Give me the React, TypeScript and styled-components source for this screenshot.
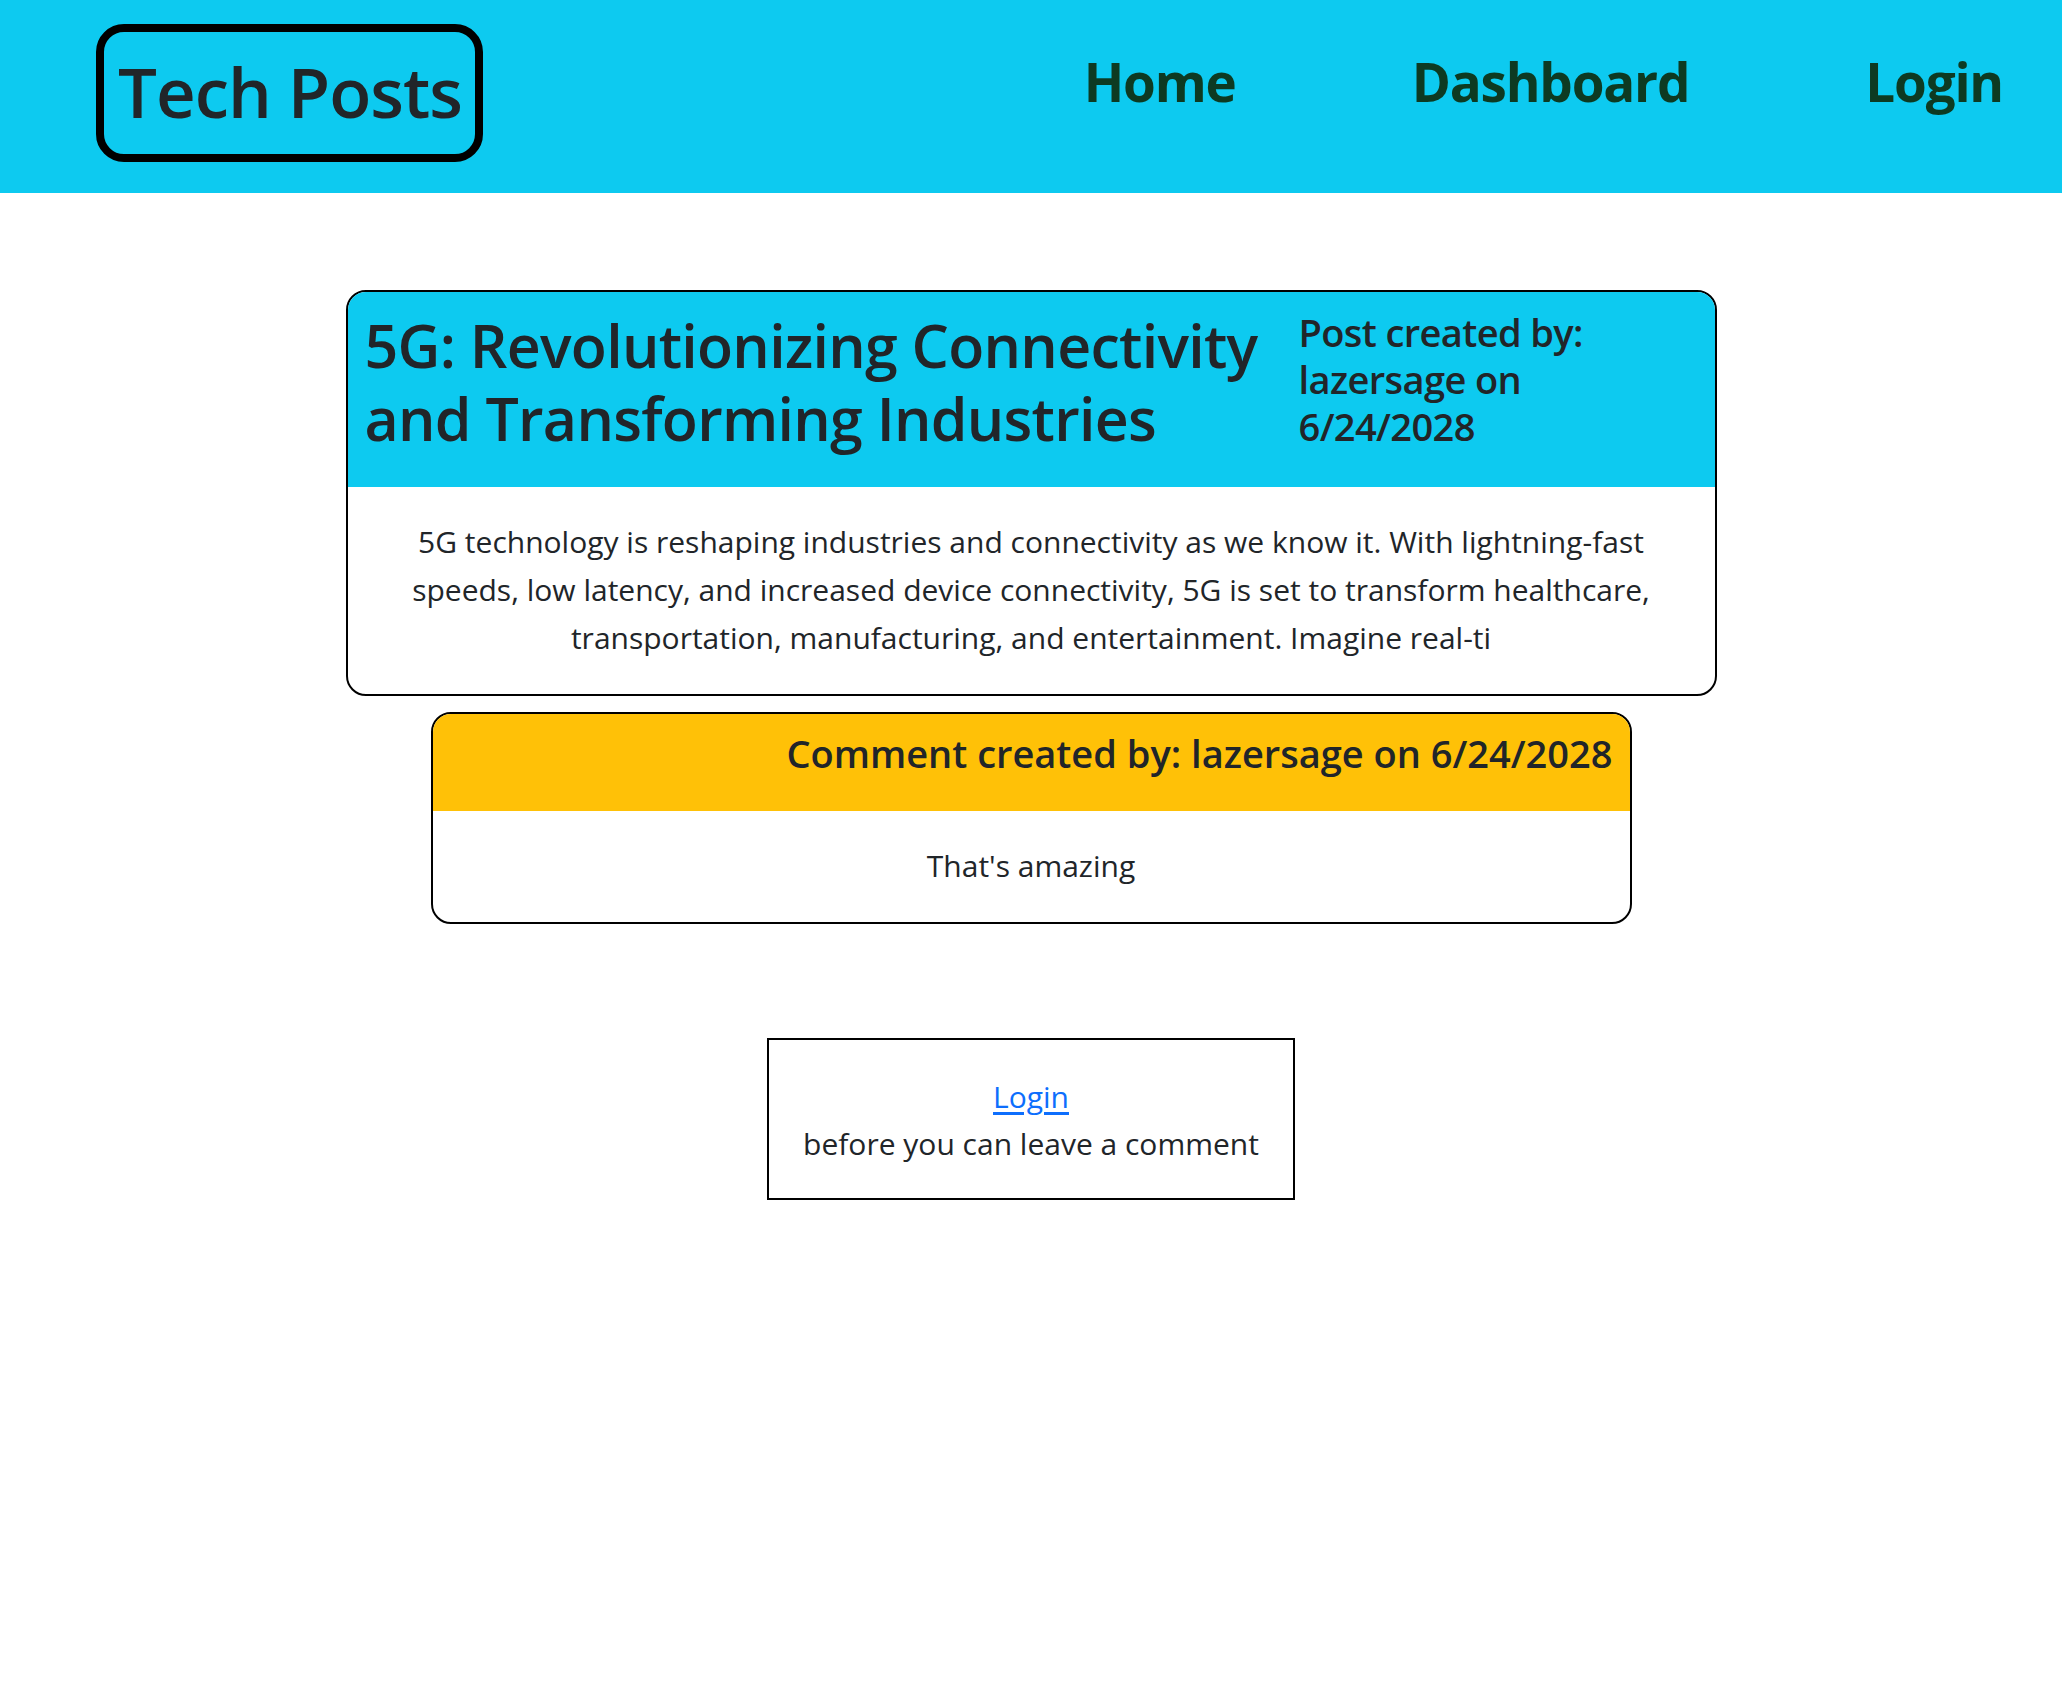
import React from "react";
import styled, { createGlobalStyle } from "styled-components";

const GlobalStyle = createGlobalStyle`
  html, body { margin: 0; padding: 0; background: #fff; }
  body {
    font-family: "Open Sans", "Noto Sans", Arial, sans-serif;
    color: #212529;
  }
  * { box-sizing: border-box; }
`;

const Header = styled.header`
  height: 193px;
  background: #0dcaf0;
  display: flex;
  align-items: center;
  justify-content: space-between;
  padding: 0 59px 0 96px;
`;

const Logo = styled.a`
  display: flex;
  align-items: center;
  height: 138px;
  margin-bottom: 7px;
  padding: 0 13px 4px 14px;
  border: 8px solid #000;
  border-radius: 28px;
  font-size: 69px;
  font-weight: 600;
  letter-spacing: -1px;
  color: #212529;
  text-decoration: none;
  white-space: nowrap;
`;

const Nav = styled.nav`
  display: flex;
  align-items: center;
  gap: 176px;
  padding-bottom: 30px;
`;

const NavLink = styled.a`
  font-size: 53px;
  font-weight: 700;
  letter-spacing: -1.2px;
  line-height: 1.2;
  color: #0d3a22;
  text-decoration: none;
`;

const Main = styled.main`
  display: flex;
  flex-direction: column;
  align-items: center;
  padding-top: 97px;
`;

const Card = styled.article<{ $width: number }>`
  width: ${(p) => p.$width}px;
  border: 2px solid #000;
  border-radius: 20px;
  overflow: hidden;
  margin-bottom: 16px;
`;

const PostHead = styled.div`
  display: grid;
  grid-template-columns: 1fr 376px;
  column-gap: 30px;
  background: #0dcaf0;
  padding: 17px 40px 32px 17px;
`;

const PostTitle = styled.h2`
  margin: 0;
  font-size: 59px;
  font-weight: 600;
  letter-spacing: -0.7px;
  line-height: 73px;
`;

const PostMeta = styled.h4`
  margin: 0;
  font-size: 38px;
  font-weight: 600;
  letter-spacing: -0.6px;
  line-height: 47px;
`;

const CommentHead = styled.div`
  background: #ffc107;
  padding: 16px 17px 34px;
  text-align: right;
`;

const CommentMeta = styled.h5`
  margin: 0;
  font-size: 38px;
  font-weight: 600;
  letter-spacing: 0;
  line-height: 47px;
`;

const CardBody = styled.p<{ $pad: number }>`
  margin: 0;
  padding: 31px ${(p) => p.$pad}px 32px;
  font-size: 30px;
  line-height: 48px;
  text-align: center;
`;

const LoginPrompt = styled.div`
  margin-top: 98px;
  width: 528px;
  border: 2px solid #000;
  padding: 33px 20px 31px;
  display: flex;
  flex-direction: column;
  align-items: center;
  font-size: 30px;
  line-height: 47px;
`;

const LoginLink = styled.a`
  color: #0d6efd;
  text-decoration: underline;
  text-underline-offset: 4px;
`;

export default function App() {
  return (
    <>
      <GlobalStyle />
      <Header>
        <Logo href="#">Tech Posts</Logo>
        <Nav>
          <NavLink href="#">Home</NavLink>
          <NavLink href="#">Dashboard</NavLink>
          <NavLink href="#">Login</NavLink>
        </Nav>
      </Header>
      <Main>
        <Card $width={1371}>
          <PostHead>
            <PostTitle>5G: Revolutionizing Connectivity and Transforming Industries</PostTitle>
            <PostMeta>Post created by: lazersage on 6/24/2028</PostMeta>
          </PostHead>
          <CardBody $pad={44}>
            5G technology is reshaping industries and connectivity as we know it. With lightning-fast speeds, low latency, and increased device connectivity, 5G is set to transform healthcare, transportation, manufacturing, and entertainment. Imagine real-ti
          </CardBody>
        </Card>
        <Card $width={1201}>
          <CommentHead>
            <CommentMeta>Comment created by: lazersage on 6/24/2028</CommentMeta>
          </CommentHead>
          <CardBody $pad={20}>That's amazing</CardBody>
        </Card>
        <LoginPrompt>
          <LoginLink href="#">Login</LoginLink>
          <span>before you can leave a comment</span>
        </LoginPrompt>
      </Main>
    </>
  );
}
